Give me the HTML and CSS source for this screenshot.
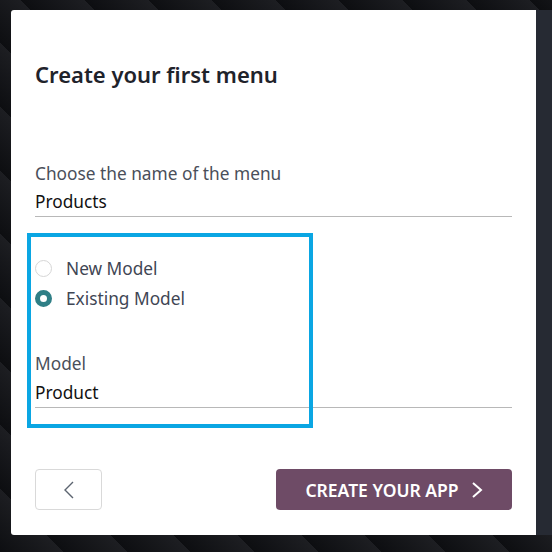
FILE: index.html
```html
<!DOCTYPE html>
<html>
	<head>
		<meta charset="utf-8">
		<meta name="viewport" content="width=device-width, initial-scale=1">
		<title>Create your first menu</title>
		<link rel="stylesheet" href="styles.css">
	</head>
	<body>
		<div class="screen">
			<!-- Карточка мастера -->
			<div class="card">
				<h2 class="title">Create your first menu</h2>

				<div class="field">
					<div class="label">Choose the name of the menu</div>
					<div class="input">Products</div>
				</div>

				<div class="radios">
					<div class="radio"><span class="dot"></span>New Model</div>
					<div class="radio"><span class="dot checked"></span>Existing Model</div>
				</div>

				<div class="field model">
					<div class="label">Model</div>
					<div class="input">Product</div>
				</div>

				<div class="buttons">
					<button class="btn back">
						<svg width="12" height="18" viewBox="0 0 12 18"><polyline points="10,1 2,9 10,17" fill="none" stroke="#5c6470" stroke-width="1.4"/></svg>
					</button>
					<button class="btn create">
						CREATE YOUR APP
						<svg width="12" height="18" viewBox="0 0 12 18"><polyline points="2,2 10,9 2,16" fill="none" stroke="#fff" stroke-width="2"/></svg>
					</button>
				</div>

				<!-- Выделение (рамка поверх) -->
				<div class="highlight"></div>
			</div>
			<div class="side"></div>
		</div>
	</body>
</html>
```

FILE: styles.css
```css
body {
	margin: 0;
	height: 552px;
	overflow: hidden;
	font-family: "Noto Sans", "Open Sans", sans-serif;
	background: repeating-linear-gradient(45deg, #0d0e11 0px, #1d1e22 45px);
}
.screen {
	display: flex;
	padding: 10px 0 0 11px;
}
/* Карточка */
.card {
	position: relative;
	box-sizing: border-box;
	width: 525px;
	height: 525px;
	background: #fff;
	border-radius: 3px 0 0 3px;
	padding: 52px 24px 0 24px;
}
.side {
	width: 16px;
	height: 525px;
	background: #262a33;
}
.title {
	margin: 0;
	font-size: 22px;
	line-height: 24px;
	font-weight: 600;
	color: #1f232b;
}
.field {
	margin-top: 76px;
}
.label {
	font-size: 17.3px;
	line-height: 24px;
	color: #4a4f5a;
}
.input {
	margin-top: 2px;
	padding: 2px 0 2px;
	font-size: 17.3px;
	line-height: 24px;
	color: #111;
	border-bottom: 1px solid #b8b8b8;
}
/* Переключатели */
.radios {
	margin-top: 36px;
}
.radio {
	display: flex;
	align-items: center;
	height: 30px;
	font-size: 17.3px;
	color: #3f4654;
}
.dot {
	box-sizing: border-box;
	width: 17px;
	height: 17px;
	border-radius: 50%;
	border: 1px solid #d6d6d6;
	margin-right: 14px;
}
.dot.checked {
	border: 5px solid #2f7f86;
	background: #fff;
}
.model {
	margin-top: 39px;
}
.model .input {
	margin-top: 3px;
}
/* Кнопки */
.buttons {
	display: flex;
	justify-content: space-between;
	margin-top: 61px;
}
.btn {
	height: 41px;
	border-radius: 4px;
	font-family: inherit;
	cursor: pointer;
	display: flex;
	align-items: center;
	justify-content: center;
}
.back {
	width: 67px;
	background: #fff;
	border: 1px solid #d9d9d9;
}
.create {
	width: 236px;
	border: none;
	background: #6e4b66;
	color: #fff;
	font-size: 17.5px;
	font-weight: 600;
	gap: 12px;
}
.highlight {
	position: absolute;
	left: 16px;
	top: 223px;
	width: 278px;
	height: 187px;
	border: 4.5px solid #0aa6e3;
}
```
